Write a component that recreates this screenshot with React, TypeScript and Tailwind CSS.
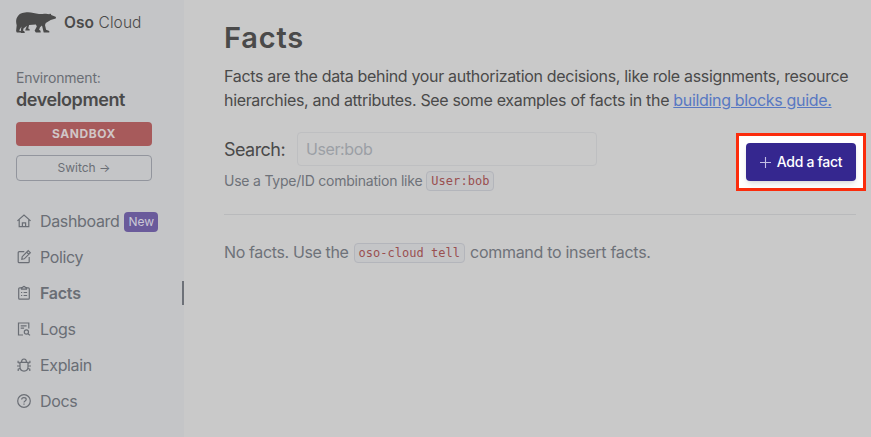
import type { ReactNode } from "react";

function Icon({ children }: { children: ReactNode }) {
  return (
    <svg viewBox="0 0 16 16" className="size-4 shrink-0" fill="none" stroke="currentColor" strokeWidth="1.2">
      {children}
    </svg>
  );
}

const icons = {
  home: (
    <Icon>
      <path d="M1.4 7.9 8 2l6.6 5.9M3.2 6.6v7.1h9.6V6.6M6.4 13.7V9.9h3.2v3.8" />
    </Icon>
  ),
  edit: (
    <Icon>
      <path d="M8.3 2.7H3.2c-.6 0-1 .4-1 1v9c0 .6.4 1 1 1h9c.6 0 1-.4 1-1V8M5.8 10.3l.4-2.6 6-6 2.1 2.1-6 6zM10.7 3.2l2.1 2.1" />
    </Icon>
  ),
  clipboard: (
    <Icon>
      <path d="M5.5 2.8H3.7c-.6 0-1 .4-1 1v9.4c0 .6.4 1 1 1h8.6c.6 0 1-.4 1-1V3.8c0-.6-.4-1-1-1h-1.8M5.5 4.2V2.6h1.2c.1-.9.6-1.3 1.3-1.3s1.2.4 1.3 1.3h1.2v1.6zM5 7.5h1.2M7.6 7.5h3.5M5 10.5h1.2M7.6 10.5h3.5" />
    </Icon>
  ),
  logs: (
    <Icon>
      <path d="M7 14H2.5V2h10.3v5.5M4.7 4.8h5.9M4.7 7.2h3.4M12 12.7l2 1.7" />
      <circle cx="10.4" cy="11" r="2.1" />
    </Icon>
  ),
  bug: (
    <Icon>
      <path d="M4 5.3h8v4.8c0 2.4-1.7 4-4 4s-4-1.6-4-4zM5.5 5.3c0-2.1.8-3.3 2.5-3.3s2.5 1.2 2.5 3.3M4 6.3 2.1 5.5V3.8M12 6.3l1.9-.8V3.8M4 9H1M12 9h3M4.4 11.3l-2.2.9v1.9M11.6 11.3l2.2.9v1.9" />
    </Icon>
  ),
  help: (
    <Icon>
      <circle cx="8" cy="8" r="6.3" />
      <path d="M5.7 6.6c0-1.2.9-1.9 2.2-1.9s2.3.7 2.3 1.8c0 1.5-2.2 1.4-2.2 2.9" />
      <path d="M8 10.5v1.2" />
    </Icon>
  ),
};

function NavItem({ icon, label, active, badge }: { icon: ReactNode; label: string; active?: boolean; badge?: string }) {
  return (
    <a className={`flex h-9 items-center pl-4 ${active ? "font-semibold tracking-[-0.25px]" : "tracking-[-0.35px]"}`}>
      {icon}
      <span className="ml-2">{label}</span>
      {badge && (
        <span className="ml-[5px] mt-px flex h-5 w-[34px] items-center justify-center rounded bg-[#6a5b9b] text-[12px] tracking-normal text-[#cbc9d6]">
          {badge}
        </span>
      )}
      {active && <span className="ml-auto h-6 w-0.5 bg-[#6d7178]" />}
    </a>
  );
}

function Code({ children }: { children: ReactNode }) {
  return (
    <code className="inline-flex h-5 items-center rounded border border-[#b3b5bb] bg-[#c4c5c7] px-1 align-middle font-['DejaVu_Sans_Mono',monospace] text-[12px] tracking-[0.03px] text-[#9a4f50]">
      {children}
    </code>
  );
}

export default function App() {
  return (
    <div className="flex h-[437px] w-[871px] overflow-hidden whitespace-nowrap bg-[#c9c9c9] font-['Inter',sans-serif] text-base text-[#4a4a4a]">
      <aside className="w-[184px] shrink-0 bg-[#c4c5c7] text-[#6a6e75]">
        <div className="flex h-[46px] items-center pl-4 text-[#4a4a4a]">
          <svg viewBox="0 0 40 21" className="-mt-0.5 h-[21px] w-10" fill="currentColor">
            <path d="M2 4C4 1 8 .3 12 .3c4 0 7 1.5 11 1.6 3 .1 5-.5 7-.1l3.3.4c1-.8 1.8-.1 1.9.8l4.4 1.7c.5.5.5 1.2.1 1.8l-5 1.6-4.9 2.8-.8 2.2 1.1 4.7 3.2 1.1v1.7h-5.6L26 13.5l-2 1.7-.9 2.6 1.4.9.2 1.9h-4.8l-1.3-1.9 2.2-4.3-.9-1.8-6.8.5-.9 3.5 1.3.5.2 1.5h-4.4l.2-1.4 1.5-3.4-3.5 2.7-.4 2 1.6 1.2v1.2H4.8L5 17l.5-2.4-2.4 3.9 2 .7v1.4H.8L.1 19l.6-5.8C-.3 10-.1 6.5 2 4Z" />
          </svg>
          <span className="ml-2 text-[15.5px] tracking-[0.08px]"><b className="font-semibold">Oso</b> <span className="font-light">Cloud</span></span>
        </div>
        <div className="px-4 pt-[21px]">
          <div className="text-[14px] leading-[22px] tracking-[-0.17px]">Environment:</div>
          <div className="text-[18px] font-semibold leading-[22px] tracking-[-0.42px] text-[#4a4a4a]">development</div>
          <div className="mt-[11px] flex h-6 w-[136px] items-center justify-center rounded bg-[#a75a5b] text-[12px] font-bold tracking-[0.6px] text-[#d0c6c7]">SANDBOX</div>
          <div className="mt-[9px] flex h-[26px] w-[136px] items-center justify-center rounded border border-[#92959d] text-[12px]">Switch →</div>
        </div>
        <nav className="mt-[22px]">
          <NavItem icon={icons.home} label="Dashboard" badge="New" />
          <NavItem icon={icons.edit} label="Policy" />
          <NavItem icon={icons.clipboard} label="Facts" active />
          <NavItem icon={icons.logs} label="Logs" />
          <NavItem icon={icons.bug} label="Explain" />
          <NavItem icon={icons.help} label="Docs" />
        </nav>
      </aside>
      <main className="min-w-0 flex-1 pl-10 pr-[15px] pt-[18px]">
        <h1 className="text-[29px] font-semibold leading-10 tracking-[0.8px]">Facts</h1>
        <p className="mt-1.5 leading-6 tracking-[-0.33px]">
          Facts are the data behind your authorization decisions, like role assignments, resource
          <br />
          hierarchies, and attributes. See some examples of facts in the{" "}
          <a className="text-[#5878c2] underline">building blocks guide.</a>
        </p>
        <div className="mt-5 flex justify-between">
          <div>
            <div className="flex items-center">
              <span className="w-[73px] text-[18px] tracking-[-0.55px]">Search:</span>
              <div className="flex h-[34px] w-[300px] items-center rounded border border-[#bebfc1] px-2 tracking-[-0.4px] text-[#9b9fa5]">User:bob</div>
            </div>
            <div className="mt-[5px] flex h-5 items-center gap-1 text-[14px] tracking-[-0.22px] text-[#6e7279]">
              <span className="-mt-0.5">Use a Type/ID combination like</span> <Code>User:bob</Code>
            </div>
          </div>
          <div className="-mr-2.5 mt-px h-[58px] w-[130px] border-[3px] border-[#fb2c0c] bg-white p-[7px]">
            <button className="flex h-[38px] w-[110px] items-center justify-center gap-1.5 rounded bg-[#35278f] text-[14px] font-medium tracking-[-0.3px] text-white shadow-md">
              <svg viewBox="0 0 10 10" className="size-[11px]" stroke="#c4bfe5" strokeWidth="1"><path d="M5 0v10M0 5h10" /></svg>
              <span className="-mt-0.5">Add a fact</span>
            </button>
          </div>
        </div>
        <hr className="mt-[23px] border-[#b9babc]" />
        <div className="mt-7 flex h-5 items-center gap-[5px] text-[#6e7279]">
          <span className="-mt-[3px] tracking-[-0.37px]">No facts. Use the</span>
          <Code>oso-cloud tell</Code>
          <span className="-mt-[3px] tracking-[-0.3px]">command to insert facts.</span>
        </div>
      </main>
    </div>
  );
}
